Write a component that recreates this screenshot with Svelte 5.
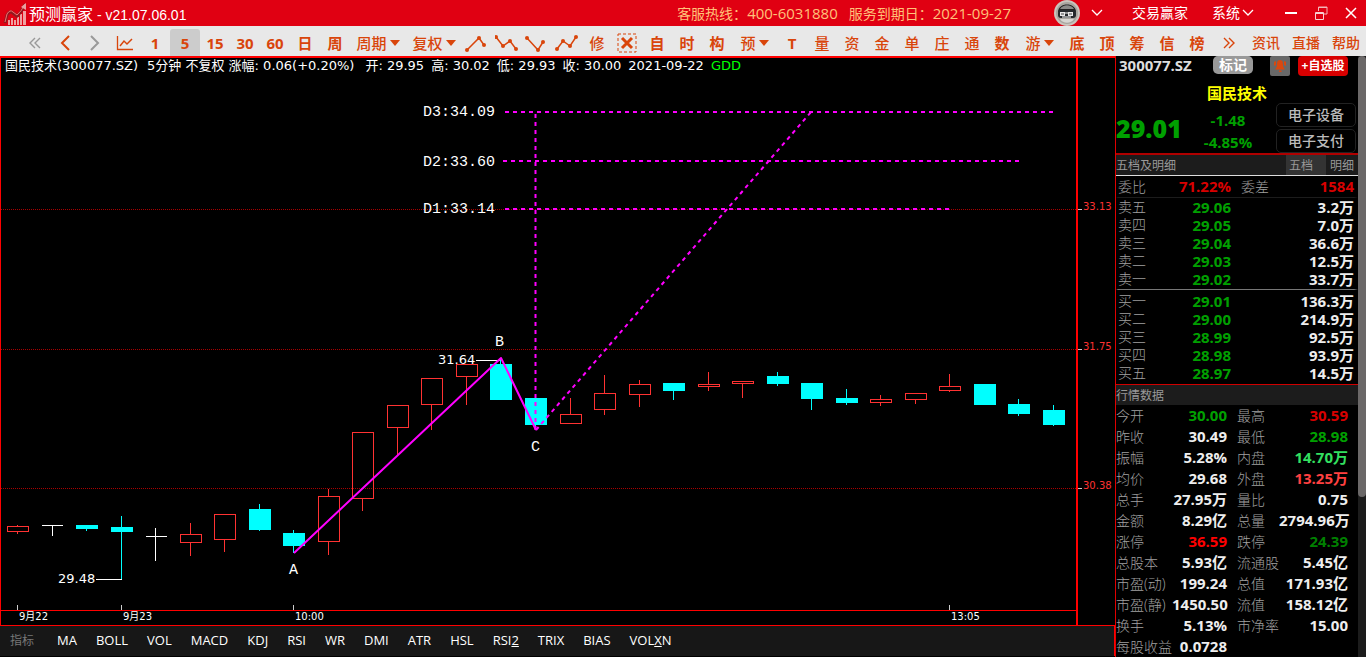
<script>
  const candles = [
    { k: 'up', x: 7, o: 526, c: 532, w: 17, h: 525, l: 534 },
    { k: 'flat', x: 42, o: 525, c: 526, w: 52, h: 525, l: 536 },
    { k: 'down', x: 76, o: 525, c: 529, w: 86, h: 525, l: 531 },
    { k: 'down', x: 111, o: 527, c: 532, w: 121, h: 516, l: 579 },
    { k: 'flat', x: 146, o: 536, c: 537, w: 155, h: 528, l: 561 },
    { k: 'up', x: 180, o: 534, c: 543, w: 190, h: 523, l: 556 },
    { k: 'up', x: 214, o: 514, c: 540, w: 224, h: 514, l: 552 },
    { k: 'down', x: 249, o: 509, c: 530, w: 259, h: 504, l: 531 },
    { k: 'down', x: 283, o: 533, c: 546, w: 293, h: 530, l: 553 },
    { k: 'up', x: 318, o: 496, c: 542, w: 328, h: 489, l: 555 },
    { k: 'up', x: 352, o: 432, c: 499, w: 362, h: 432, l: 511 },
    { k: 'up', x: 387, o: 405, c: 428, w: 397, h: 405, l: 455 },
    { k: 'up', x: 421, o: 378, c: 405, w: 431, h: 378, l: 430 },
    { k: 'up', x: 456, o: 364, c: 377, w: 466, h: 364, l: 405 },
    { k: 'down', x: 490, o: 364, c: 400, w: 500, h: 358, l: 400 },
    { k: 'down', x: 525, o: 398, c: 425, w: 535, h: 398, l: 430 },
    { k: 'up', x: 560, o: 414, c: 424, w: 570, h: 398, l: 424 },
    { k: 'up', x: 594, o: 393, c: 410, w: 604, h: 375, l: 415 },
    { k: 'up', x: 629, o: 384, c: 395, w: 639, h: 380, l: 407 },
    { k: 'down', x: 663, o: 383, c: 391, w: 673, h: 383, l: 400 },
    { k: 'up', x: 698, o: 384, c: 387, w: 708, h: 372, l: 391 },
    { k: 'up', x: 732, o: 381, c: 384, w: 742, h: 381, l: 398 },
    { k: 'down', x: 767, o: 376, c: 384, w: 777, h: 372, l: 386 },
    { k: 'down', x: 801, o: 383, c: 399, w: 811, h: 383, l: 410 },
    { k: 'down', x: 836, o: 398, c: 403, w: 846, h: 389, l: 405 },
    { k: 'up', x: 870, o: 399, c: 403, w: 880, h: 395, l: 406 },
    { k: 'up', x: 905, o: 393, c: 400, w: 915, h: 393, l: 404 },
    { k: 'up', x: 939, o: 386, c: 391, w: 949, h: 374, l: 392 },
    { k: 'down', x: 974, o: 384, c: 405, w: 984, h: 384, l: 405 },
    { k: 'down', x: 1008, o: 404, c: 414, w: 1018, h: 399, l: 416 },
    { k: 'down', x: 1043, o: 410, c: 425, w: 1053, h: 405, l: 426 }
  ];

  const grid = [
    { y: 209, label: '33.13' },
    { y: 349, label: '31.75' },
    { y: 488, label: '30.38' }
  ];
  const times = [
    { x: 17, label: '9月22' },
    { x: 121, label: '9月23' },
    { x: 293, label: '10:00' },
    { x: 949, label: '13:05' }
  ];
  const targets = [
    { y: 112, x1: 505, x2: 1054, t: 116, label: 'D3:34.09' },
    { y: 161, x1: 503, x2: 1020, t: 166, label: 'D2:33.60' },
    { y: 209, x1: 505, x2: 950, t: 213, label: 'D1:33.14' }
  ];
  const ohlc = [
    ['开:', '29.95'],
    ['高:', '30.02'],
    ['低:', '29.93'],
    ['收:', '30.00']
  ];

  let period = $state('5');
  const periods = ['1', '5', '15', '30', '60', '日', '周'];
  const shapes = [
    { name: '上升折线', pts: [[2, 17], [14, 5], [19, 12]] },
    { name: '下降折线', pts: [[1, 4], [8, 13], [15, 8], [21, 16]] },
    { name: '回调折线', pts: [[2, 5], [13, 17], [18, 9]] },
    { name: '突破折线', pts: [[2, 16], [8, 8], [15, 13], [21, 4]] }
  ];
  const toolsC = ['T', '量', '资', '金', '单', '庄', '通', '数'];
  const toolsD = ['底', '顶', '筹', '信', '榜'];
  const links = ['资讯', '直播', '帮助'];

  // Each entry: text before, underlined shortcut letter, text after.
  const indicators = [
    ['MA'], ['BOLL'], ['VOL'], ['MACD'], ['KDJ'], ['RSI'], ['WR'], ['DMI'], ['ATR'], ['HSL'],
    ['RSI', '2'], ['TRIX'], ['BIAS'], ['VOL', 'X', 'N']
  ];

  const sells = [
    ['卖五', '29.06', '3.2万'],
    ['卖四', '29.05', '7.0万'],
    ['卖三', '29.04', '36.6万'],
    ['卖二', '29.03', '12.5万'],
    ['卖一', '29.02', '33.7万']
  ];
  const buys = [
    ['买一', '29.01', '136.3万'],
    ['买二', '29.00', '214.9万'],
    ['买三', '28.99', '92.5万'],
    ['买四', '28.98', '93.9万'],
    ['买五', '28.97', '14.5万']
  ];
  const stats = [
    ['今开', '30.00', 'green', '最高', '30.59', 'red'],
    ['昨收', '30.49', '', '最低', '28.98', 'green'],
    ['振幅', '5.28%', '', '内盘', '14.70万', 'mint'],
    ['均价', '29.68', '', '外盘', '13.25万', 'coral'],
    ['总手', '27.95万', '', '量比', '0.75', ''],
    ['金额', '8.29亿', '', '总量', '2794.96万', ''],
    ['涨停', '36.59', 'bright', '跌停', '24.39', 'dark'],
    ['总股本', '5.93亿', '', '流通股', '5.45亿', ''],
    ['市盈(动)', '199.24', '', '总值', '171.93亿', ''],
    ['市盈(静)', '1450.50', '', '流值', '158.12亿', ''],
    ['换手', '5.13%', '', '市净率', '15.00', ''],
    ['每股收益', '0.0728', '', '', '', '']
  ];
</script>

<div class="app">
  <header class="titlebar">
    <svg class="logo" width="26" height="26" viewBox="0 0 26 26" aria-hidden="true">
      <g fill="#f0a0a0">
        <rect x="6" y="20" width="2" height="5" /><rect x="9" y="18" width="2" height="7" />
        <rect x="12" y="20" width="2" height="5" /><rect x="15" y="17" width="2" height="8" />
        <rect x="18" y="14" width="2" height="11" /><rect x="21" y="11" width="3" height="14" />
      </g>
      <path d="M3 23L5 15Q8 10 11 13L15 16Q19 13 23 4" fill="none" stroke="#8f1a20" stroke-width="3" />
      <path d="M3 22L5 14Q8 9 11 12L15 15Q19 12 23 4" fill="none" stroke="#f07070" stroke-width="1" />
      <path d="M19 7L24 3L24 10Z" fill="#e8a0a0" />
    </svg>
    <h1><span>预测赢家</span> - v21.07.06.01</h1>
    <p class="service">
      <span>客服热线：<b>400-6031880</b></span>
      <span>服务到期日：<b>2021-09-27</b></span>
    </p>
    <button class="avatar" aria-label="用户">
      <svg width="26" height="26" viewBox="0 0 26 26">
        <circle cx="13" cy="13" r="13" fill="#c9c5bd" />
        <circle cx="13" cy="13" r="11" fill="#a8a59f" />
        <path d="M4 12C4 2 22 2 22 12Z" fill="#222" />
        <path d="M6 9C9 4 17 4 20 9Z" fill="#8a8a88" />
        <rect x="4" y="10" width="18" height="8" rx="3" fill="#25282b" />
        <path d="M6 12h5v4h-5zM14 12h5v4h-5z" fill="#e8e8e8" />
        <path d="M7 14h3M15 14h3" stroke="#444" />
        <path d="M11 13h3M8 17h9" stroke="#fff" />
        <path d="M6 19C9 24 17 24 20 19Z" fill="#d8d6d2" />
      </svg>
      <svg width="12" height="8" viewBox="0 0 12 8"><path d="M1 1L6 6L11 1" fill="none" stroke="#fff" stroke-width="1.300" /></svg>
    </button>
    <button class="menu trade">交易赢家</button>
    <button class="menu system">系统<svg width="12" height="8" viewBox="0 0 12 8"><path d="M1 1L6 6L11 1" fill="none" stroke="#fff" stroke-width="1.300" /></svg></button>
    <div class="window">
      <button aria-label="最小化"><svg width="14" height="14" viewBox="0 0 14 14"><path d="M1 7H13" stroke="#fff" stroke-width="2" /></svg></button>
      <button aria-label="还原"><svg width="14" height="14" viewBox="0 0 14 14"><path d="M4.500 5V1H13V8H9.500M4 1.500H13" fill="none" stroke="#f3b5b8" stroke-width="1" /><path d="M1.500 6.500H9.500V13.500H1.500ZM1 7.500H10" fill="none" stroke="#f7d0d2" /></svg></button>
      <button aria-label="关闭"><svg width="14" height="14" viewBox="0 0 14 14"><path d="M2 2L12 12M12 2L2 12" stroke="#fff" stroke-width="1.500" /></svg></button>
    </div>
  </header>

  <nav class="toolbar" aria-label="工具栏">
    <button class="muted" aria-label="最前"><svg width="12" height="14" viewBox="0 0 12 14"><path d="M6 2L1 7L6 12M11 2L6 7L11 12" fill="none" stroke="currentColor" stroke-width="1.400" /></svg></button>
    <button aria-label="后退"><svg width="10" height="16" viewBox="0 0 10 16"><path d="M9 1L2 8L9 15" fill="none" stroke="currentColor" stroke-width="2" /></svg></button>
    <button class="muted" aria-label="前进"><svg width="10" height="16" viewBox="0 0 10 16"><path d="M1 1L8 8L1 15" fill="none" stroke="currentColor" stroke-width="2" /></svg></button>
    <button aria-label="分时"><svg width="18" height="16" viewBox="0 0 18 16"><path d="M1.500 1V14.500H17" fill="none" stroke="currentColor" stroke-width="1.300" /><path d="M4 11L8 6L11 9L16 4" fill="none" stroke="currentColor" stroke-width="1.500" /></svg></button>
    {#each periods as p}
      <button class="bold" class:active={period === p} onclick={() => (period = p)}>{p}</button>
    {/each}
    <button class="wide" aria-haspopup="true">周期<i></i></button>
    <button class="wide" aria-haspopup="true">复权<i></i></button>
    {#each shapes as s}
      <button aria-label={s.name}>
        <svg width="24" height="20" viewBox="0 0 24 20">
          <polyline points={s.pts.map((p) => p.join(',')).join(' ')} fill="none" stroke="currentColor" stroke-width="1.500" />
          {#each s.pts as p}<circle cx={p[0]} cy={p[1]} r="2" fill="currentColor" />{/each}
        </svg>
      </button>
    {/each}
    <button>修</button>
    <button aria-label="清除"><svg width="20" height="20" viewBox="0 0 20 20"><rect x="1" y="1" width="18" height="18" fill="none" stroke="currentColor" stroke-dasharray="3 2" /><path d="M5 5L15 15M15 5L5 15" stroke="currentColor" stroke-width="3" /></svg></button>
    <button class="bold">自</button>
    <button class="bold">时</button>
    <button class="bold">构</button>
    <button class="mid" aria-haspopup="true">预<i></i></button>
    {#each toolsC as t}<button class:bold={t === 'T' || t === '数'}>{t}</button>{/each}
    <button class="mid" aria-haspopup="true">游<i></i></button>
    {#each toolsD as t}<button class="bold">{t}</button>{/each}
    <button class="more" aria-label="更多"><svg width="12" height="14" viewBox="0 0 12 14"><path d="M1 2L6 7L1 12M6 2L11 7L6 12" fill="none" stroke="currentColor" stroke-width="1.400" /></svg></button>
    {#each links as l}<a href="#{l}">{l}</a>{/each}
  </nav>

  <main>
    <section class="left">
      <div class="chart">
        <svg class="plot" viewBox="0 56 1115 570" role="img" aria-label="5分钟K线">
          {#each grid as g}
            <path d="M1 {g.y}.5H1077" stroke="#a80000" stroke-dasharray="1 1" shape-rendering="crispEdges" />
            <path d="M1077 {g.y}.5H1082" stroke="#ccc" />
            <text class="axis" x="1083" y={g.y + 1}>{g.label}</text>
          {/each}
          {#each candles as c}
            <g class={c.k} shape-rendering="crispEdges">
              {#if c.k === 'up'}
                <path d="M{c.w}.5 {c.h}V{c.o}M{c.w}.5 {c.c}V{c.l}" />
                <rect x={c.x + 0.5} y={c.o + 0.5} width="21" height={c.c - c.o - 1} />
              {:else}
                <path d="M{c.w}.5 {c.h}V{c.l}" />
                <rect x={c.x} y={c.o} width={c.k === 'flat' ? 21 : 22} height={c.c - c.o} />
              {/if}
            </g>
          {/each}
          <path d="M96 579.5H122M476 360.500H500" stroke="#fff" />
          <text class="price" x="58" y="583">29.48</text>
          <text class="price" x="438" y="364">31.64</text>

          <g fill="none" stroke="#f0f" stroke-width="2">
            {#each targets as t}
              <path d="M{t.x1} {t.y}H{t.x2}" stroke-dasharray="4 4" />
            {/each}
            <path d="M535.500 114V430" stroke-dasharray="4 4" />
            <path d="M536 430L811 112" stroke-dasharray="4 4" />
            <path d="M294 553L501 358L536 430" stroke-linejoin="round" />
          </g>
          {#each targets as t}
            <text class="mark" x="423" y={t.t}>{t.label}</text>
          {/each}
          <text class="mark" x="289" y="574">A</text>
          <text class="mark" x="495" y="346">B</text>
          <text class="mark" x="531" y="451">C</text>

          <g fill="#f00" shape-rendering="crispEdges">
            <rect x="0" y="56" width="1115" height="2" />
            <rect x="0" y="56" width="1" height="570" />
            <rect x="1076" y="56" width="2" height="570" />
            <rect x="0" y="610" width="1077" height="1" />
            <rect x="0" y="625" width="1115" height="1" />
          </g>
          {#each times as t}
            <path d="M{t.x}.5 605V610" stroke="#ccc" />
            <text class="time" x={t.x + 2} y="620">{t.label}</text>
          {/each}
        </svg>
        <div class="info">
          <span>国民技术(300077.SZ)</span>
          <span class="change-info">5分钟 不复权 涨幅: 0.06(+0.20%)</span>
          {#each ohlc as [k, v]}<span>{k} {v}</span>{/each}
          <span>2021-09-22</span>
          <span class="gdd">GDD</span>
        </div>
      </div>
      <div class="indicators">
        <span>指标</span>
        {#each indicators as [before, key, after]}<button>{before}{#if key}<u>{key}</u>{/if}{after ?? ''}</button>{/each}
      </div>
    </section>

    <aside>
      <div class="quote">
        <div class="head">
          <strong>300077.SZ</strong>
          <button class="tag">标记</button>
          <button class="bell" aria-label="预警">
            <svg width="14" height="14" viewBox="0 0 14 14" fill="#d9480f"><path d="M7 1C4 1 4 4 4 6C4 8 3 9 2 10.500H12C11 9 10 8 10 6C10 4 10 1 7 1Z" /><path d="M6 11.500H8.500V13H6ZM1 3L3 2V6L1 7ZM13 3L11 2V6L13 7Z" /></svg>
          </button>
          <button class="add">+自选股</button>
        </div>
        <h2>国民技术</h2>
        <div class="last">
          <strong>29.01</strong>
          <div class="change"><span>-1.48</span><span>-4.85%</span></div>
          <div class="sectors"><button>电子设备</button><button>电子支付</button></div>
        </div>
        <div class="bar tabs">
          <span>五档及明细</span>
          <button class="on">五档</button>
          <button>明细</button>
        </div>
        <table class="ratio">
          <tbody><tr><th>委比</th><td class="red">71.22%</td><th class="second">委差</th><td class="red">1584</td></tr></tbody>
        </table>
        <table class="book">
          <tbody>{#each sells as [n, p, v]}<tr><th>{n}</th><td class="green">{p}</td><td>{v}</td></tr>{/each}</tbody>
        </table>
        <table class="book buy">
          <tbody>{#each buys as [n, p, v]}<tr><th>{n}</th><td class="green">{p}</td><td>{v}</td></tr>{/each}</tbody>
        </table>
        <div class="bar data"><span>行情数据</span></div>
        <table class="stats">
          <tbody>
            {#each stats as [a, b, bc, c, d, dc]}
              <tr><th>{a}</th><td class={bc}>{b}</td><th class="second">{c}</th><td class={dc}>{d}</td></tr>
            {/each}
          </tbody>
        </table>
      </div>
      <div class="scroll"><div class="thumb"></div></div>
    </aside>
  </main>
</div>

<style>
  :global(body) {
    background: #000;
  }
  .app {
    font-family: 'Open Sans', 'Noto Sans CJK SC', sans-serif;
    color: #fff;
    background: #000;
    overflow: hidden;
  }
  button {
    font: inherit;
    color: inherit;
    background: none;
    border: 0;
    padding: 0;
    margin: 0;
    cursor: pointer;
    white-space: nowrap;
  }
  svg {
    display: block;
  }

  .titlebar {
    display: flex;
    align-items: center;
    height: 26px;
    background: #e00012;
    font-size: 14px;
    line-height: 26px;
  }
  .logo {
    margin-left: 2px;
  }
  h1 {
    margin: 0 auto 0 1px;
    padding-top: 4px;
    font: 14px/24px 'Liberation Sans', 'Noto Sans CJK SC', sans-serif;
    white-space: nowrap;
  }
  h1 span {
    font-size: 16px;
  }
  .service {
    display: flex;
    gap: 11px;
    margin: 0 43px 0 0;
    color: #ffc27a;
    white-space: nowrap;
  }
  .service b {
    font-weight: 400;
    font-size: 15px;
  }
  .avatar {
    display: flex;
    align-items: center;
    gap: 11px;
    margin-right: 29px;
  }
  .trade {
    margin-right: 24px;
  }
  .system {
    display: flex;
    align-items: center;
    gap: 2px;
    margin-right: 30px;
  }
  .window {
    display: flex;
    gap: 16px;
    margin-right: 8px;
  }

  .toolbar {
    display: flex;
    box-sizing: border-box;
    height: 30px;
    padding: 3px 0 0 20px;
    background: #e8e8e8;
    color: #d9450b;
    font-size: 15px;
    line-height: 28px;
  }
  .toolbar button,
  .toolbar a {
    display: flex;
    flex: none;
    align-items: center;
    justify-content: center;
    gap: 3px;
    width: 30px;
    font-weight: 500;
  }
  .toolbar .bold {
    font-weight: 700;
  }
  .toolbar .muted {
    color: #999;
  }
  .toolbar .active {
    background: #ccc;
    border-radius: 3px 3px 0 0;
  }
  .toolbar .wide {
    width: 56px;
  }
  .toolbar .mid {
    width: 45px;
  }
  .toolbar .more {
    width: 34px;
    margin-right: auto;
  }
  .toolbar i {
    border: 5px solid transparent;
    border-top: 6px solid currentColor;
    border-bottom: 0;
  }
  .toolbar a {
    width: 40px;
    color: inherit;
    font-size: 14px;
    text-decoration: none;
  }

  main {
    display: grid;
    grid-template-columns: minmax(0, 1fr) 251px;
  }
  .chart {
    display: grid;
  }
  .plot,
  .info {
    grid-area: 1 / 1;
  }
  .plot {
    width: 100%;
    height: auto;
  }
  .info {
    display: flex;
    align-self: start;
    gap: 7px;
    padding: 2px 0 0 5px;
    font: 13px/16px 'DejaVu Sans', 'Noto Sans CJK SC', sans-serif;
    white-space: nowrap;
  }
  .change-info {
    padding: 0 4px 0 2px;
  }
  .gdd {
    color: #0f0;
  }
  .plot text {
    fill: #fff;
    font-family: 'DejaVu Sans', 'Noto Sans CJK SC', sans-serif;
  }
  .plot .axis {
    fill: #ff3232;
    font-size: 10px;
  }
  .plot .time {
    font-size: 10px;
  }
  .plot .price {
    font-size: 13px;
  }
  .plot .mark {
    font-family: 'Liberation Mono', monospace;
    font-size: 15px;
  }
  .up {
    fill: none;
    stroke: #ff3232;
  }
  .down path {
    stroke: #0ff;
  }
  .down rect {
    fill: #0ff;
  }
  .flat path {
    stroke: #fff;
  }
  .flat rect {
    fill: #fff;
  }

  .indicators {
    display: flex;
    align-items: center;
    gap: 19px;
    height: 30px;
    padding-left: 10px;
    background: #171717;
    border-right: 1px solid #f00;
    font-size: 13px;
    line-height: 28px;
  }
  .indicators button {
    padding-bottom: 2px;
  }
  .indicators span {
    margin-right: 4px;
    color: #777;
    font-size: 12px;
  }

  aside {
    display: flex;
    border-left: 1px solid #e00000;
  }
  .quote {
    flex: 1;
    min-width: 0;
  }
  .scroll {
    width: 8px;
    background: #1c1c1c;
  }
  .thumb {
    height: 441px;
    background: #6b6868;
    border-radius: 4px;
  }
  .head {
    display: flex;
    align-items: flex-start;
    height: 27px;
    padding: 0 10px 0 3px;
    line-height: 18px;
  }
  .head strong {
    margin-right: auto;
    color: #ddd;
    font-size: 15px;
  }
  .tag {
    width: 40px;
    height: 18px;
    margin-right: 17px;
    background: #999;
    border-radius: 5px;
    font-size: 14px;
    font-weight: 700;
  }
  .bell {
    display: grid;
    place-items: center;
    width: 20px;
    height: 20px;
    margin-right: 8px;
    background: #686868;
    border-radius: 2px;
  }
  .add {
    width: 50px;
    height: 20px;
    background: #d80000;
    border-radius: 4px;
    font-size: 12px;
    font-weight: 700;
  }
  h2 {
    margin: 0;
    color: #ff0;
    font-size: 15px;
    line-height: 20px;
    text-align: center;
  }
  .last {
    display: grid;
    grid-template-columns: 64px 1fr 80px;
    align-items: center;
    height: 50px;
    padding-right: 2px;
    color: #00a000;
    font-weight: 700;
  }
  .last strong {
    font-size: 25px;
    line-height: 30px;
  }
  .change {
    display: grid;
    padding-top: 6px;
    font-size: 15px;
    line-height: 22px;
    text-align: center;
  }
  .sectors {
    display: grid;
    gap: 2px;
  }
  .sectors button {
    height: 24px;
    border: 1px solid #222;
    border-radius: 5px;
    color: #bbb;
    font-size: 14px;
    font-weight: 500;
    line-height: 22px;
  }
  .bar {
    display: flex;
    height: 20px;
    background: #1c1c1c;
    color: #999;
    font-size: 12px;
    line-height: 22px;
  }
  .bar span {
    margin-right: auto;
  }
  .bar button {
    width: 32px;
  }
  .bar .on {
    width: 40px;
    padding-right: 10px;
    background: #333;
  }
  .tabs {
    border-top: 2px solid #b00000;
    border-bottom: 1px solid #ddd;
  }
  .data {
    border-top: 1px solid #d00000;
  }
  table {
    width: 100%;
    border-collapse: collapse;
    table-layout: fixed;
    font-size: 15px;
    line-height: 18px;
  }
  th,
  td {
    padding: 0;
    white-space: nowrap;
  }
  th {
    color: #a0a0a0;
    font-size: 14px;
    font-weight: 300;
    text-align: left;
  }
  td {
    color: #eee;
    font-weight: 700;
    text-align: right;
  }
  .ratio,
  .book {
    border-right: 4px solid transparent;
    border-left: 2px solid transparent;
    border-collapse: separate;
    border-spacing: 0;
  }
  .ratio {
    line-height: 21px;
    border-bottom: 1px solid #1c1c1c;
  }
  .ratio th,
  .book th {
    width: 40px;
  }
  .ratio td:nth-child(2),
  .book td:nth-child(2) {
    width: 73px;
  }
  .ratio .second {
    width: 50px;
    padding-left: 10px;
    box-sizing: border-box;
  }
  .book.buy {
    margin-top: 1px;
    padding: 2px 0;
    border-top: 1px solid #777;
  }
  .stats {
    line-height: 21px;
    width: calc(100% - 10px);
  }
  .stats th {
    width: 56px;
  }
  .stats td:nth-child(2) {
    width: 55px;
  }
  .stats .second {
    padding-left: 10px;
    width: 42px;
  }
  .green {
    color: #00a000;
  }
  .red {
    color: #d80000;
  }
  .mint {
    color: #33e060;
  }
  .coral {
    color: #ff4040;
  }
  .bright {
    color: #f00;
  }
  .dark {
    color: #008000;
  }
</style>
